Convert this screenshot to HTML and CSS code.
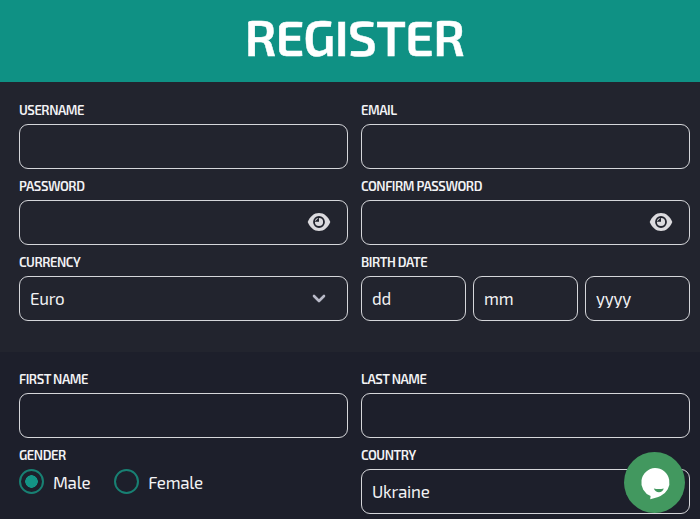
FILE: index.html
```
<!DOCTYPE html>
<html lang="en">
<head>
  <meta charset="UTF-8" />
  <meta name="viewport" content="width=device-width, initial-scale=1.0"/>
  <title>Register</title>
  <link rel="stylesheet" href="styles.css">
</head>
<body>
  <header class="header">
    <h1>REGISTER</h1>
  </header>

  <form>
    <!-- Account -->
    <section class="section account">
      <div class="field">
        <label for="username">USERNAME</label>
        <input type="text" id="username">
      </div>
      <div class="field">
        <label for="email">EMAIL</label>
        <input type="email" id="email">
      </div>
      <div class="field">
        <label for="password">PASSWORD</label>
        <div class="control">
          <input type="password" id="password">
          <svg class="eye" viewBox="0 0 24 20">
            <path class="eye-shape" d="M.7 10C3 4.400 7 1 12 1s9 3.400 11.300 9C21 15.600 17 19 12 19S3 15.600.7 10z"/>
            <circle class="eye-ring" cx="12" cy="10" r="5"/>
            <path class="eye-shine" d="M12 5.500v4.200H7.500z"/>
          </svg>
        </div>
      </div>
      <div class="field">
        <label for="confirm">CONFIRM PASSWORD</label>
        <div class="control">
          <input type="password" id="confirm">
          <svg class="eye" viewBox="0 0 24 20">
            <path class="eye-shape" d="M.7 10C3 4.400 7 1 12 1s9 3.400 11.300 9C21 15.600 17 19 12 19S3 15.600.7 10z"/>
            <circle class="eye-ring" cx="12" cy="10" r="5"/>
            <path class="eye-shine" d="M12 5.500v4.200H7.500z"/>
          </svg>
        </div>
      </div>
      <div class="field">
        <label for="currency">CURRENCY</label>
        <div class="control">
          <select id="currency">
            <option>Euro</option>
          </select>
          <svg class="chevron" viewBox="0 0 14 9">
            <path d="M2 2l5 5 5-5"/>
          </svg>
        </div>
      </div>
      <div class="field">
        <label for="day">BIRTH DATE</label>
        <div class="date">
          <input type="text" id="day" placeholder="dd">
          <input type="text" id="month" placeholder="mm">
          <input type="text" id="year" placeholder="yyyy">
        </div>
      </div>
    </section>

    <!-- Personal details -->
    <section class="section personal">
      <div class="field">
        <label for="first">FIRST NAME</label>
        <input type="text" id="first">
      </div>
      <div class="field">
        <label for="last">LAST NAME</label>
        <input type="text" id="last">
      </div>
      <div class="field">
        <label>GENDER</label>
        <div class="radios">
          <label class="radio"><input type="radio" name="gender" checked><span>Male</span></label>
          <label class="radio"><input type="radio" name="gender"><span>Female</span></label>
        </div>
      </div>
      <div class="field">
        <label for="country">COUNTRY</label>
        <select id="country">
          <option>Ukraine</option>
        </select>
      </div>
    </section>
  </form>

  <button class="chat" aria-label="Chat">
    <svg viewBox="0 0 61 61">
      <path class="bubble" d="M31 16a14.500 14.500 0 0 1 5.500 27.900C33.500 45.200 30 46.200 26.200 47.200L26.600 44A14.500 14.500 0 0 1 31 16z"/>
      <path class="smile" d="M29.800 36.500q5 1.200 10 0c-.7 2.400-2.500 3.700-4.800 3.700s-4.400-1.300-5.200-3.700z"/>
    </svg>
  </button>
</body>
</html>
```
FILE: styles.css
```
* {
  box-sizing: border-box;
}
body {
  font-family: 'Exo 2', Roboto, sans-serif;
  background: #1d1f2b;
  color: #f3f3f5;
  margin: 0;
  height: 519px;
  overflow: hidden;
}
.header {
  height: 82px;
  background: #0f9184;
  text-align: center;
}
h1 {
  margin: 0;
  padding-left: 9px;
  color: #fff;
  font-size: 50px;
  font-weight: 600;
  letter-spacing: -0.6px;
  line-height: 73px;
  -webkit-text-stroke: 0.5px #fff;
}
.section {
  display: grid;
  grid-template-columns: 1fr 1fr;
  gap: 9px 13px;
  padding: 20px 10px 31px 19px;
}
.account {
  background: #22242e;
}
.personal {
  padding-top: 19px;
  padding-bottom: 0;
}
.field > label {
  display: block;
  height: 22px;
  font-size: 13px;
  font-weight: 600;
  letter-spacing: -0.45px;
  line-height: 17px;
}
input,
select {
  display: block;
  appearance: none;
  width: 100%;
  height: 45px;
  margin: 0;
  padding: 0 10px 2px;
  background: transparent;
  border: 1px solid #d5d6da;
  border-radius: 9px;
  color: #f3f3f5;
  font-family: inherit;
  font-size: 17px;
  letter-spacing: -0.25px;
  outline: none;
}
input::placeholder {
  color: #f3f3f5;
  opacity: 1;
}
.control {
  position: relative;
}
.eye {
  position: absolute;
  top: 12px;
  right: 17px;
  width: 24px;
  height: 20px;
}
.eye-shape {
  fill: #dcdbdf;
}
.eye-ring {
  fill: none;
  stroke: #22242e;
  stroke-width: 1.8;
}
.eye-shine {
  fill: #22242e;
}
.chevron {
  position: absolute;
  top: 18px;
  right: 22px;
  width: 14px;
  height: 9px;
  fill: none;
  stroke: #b9bac8;
  stroke-width: 2.6;
  stroke-linecap: round;
  stroke-linejoin: round;
}
.date {
  display: grid;
  grid-template-columns: repeat(3, 1fr);
  gap: 7px;
}
.radios {
  display: flex;
  gap: 24px;
}
.radio {
  display: flex;
  align-items: center;
  gap: 9px;
  height: 25px;
  font-size: 17px;
  letter-spacing: -0.3px;
}
.radio span {
  padding-top: 1px;
}
.radio input {
  width: 25px;
  height: 25px;
  padding: 0;
  border: 2px solid #188073;
  border-radius: 50%;
}
.radio input:checked {
  background: radial-gradient(circle, #139486 6px, transparent 6.5px);
}
.chat {
  position: fixed;
  right: 15px;
  bottom: 6px;
  width: 61px;
  height: 61px;
  padding: 0;
  background: #42985f;
  border: none;
  border-radius: 50%;
}
.chat svg {
  display: block;
}
.bubble {
  fill: #fff;
}
.smile {
  fill: #42985f;
}
```
